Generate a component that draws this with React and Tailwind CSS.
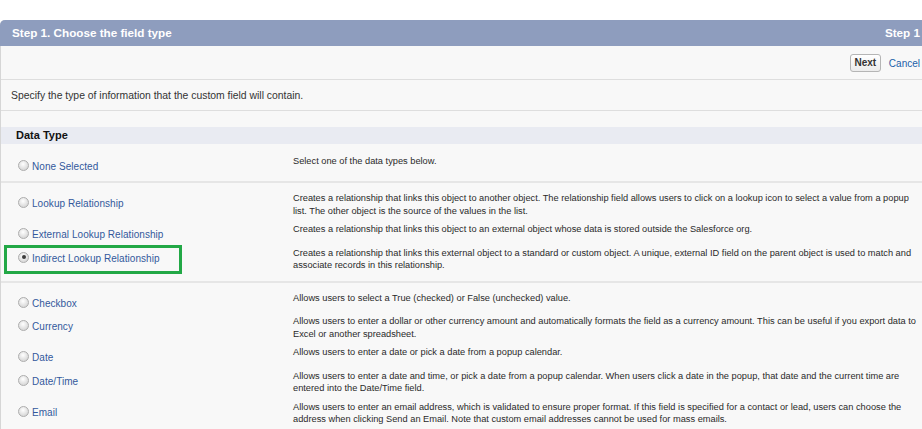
import React from "react";

function Radio({ checked }) {
  return (
    <span className="relative inline-block w-[11px] h-[11px] shrink-0 rounded-full border border-[#adadad] bg-[radial-gradient(circle_at_45%_35%,#ffffff_0%,#e2e2e2_55%,#cccccc_100%)]">
      {checked && (
        <span className="absolute left-[2.5px] top-[2.5px] w-[4px] h-[4px] rounded-full bg-[#3c3c3c]" />
      )}
    </span>
  );
}

function Row({ label, lines, checked, highlight }) {
  return (
    <div className="relative grid grid-cols-[292px_1fr]">
      <div className="flex items-start h-[23.5px] pt-[5px] pl-[17px] gap-[3px]">
        <Radio checked={checked} />
        <span className="text-[10px] leading-[13px] text-[#33589c] tracking-[0.05px] whitespace-nowrap">
          {label}
        </span>
      </div>
      <div className="pb-[6px] text-[9.25px] leading-[12.5px] text-[#2a2a2a] whitespace-nowrap">
        {lines.map((l, i) => (
          <div key={i}>{l}</div>
        ))}
      </div>
      {highlight && (
        <div className="absolute left-[3px] -top-[1.5px] w-[178px] h-[29px] border-[3px] border-[#22a846]" />
      )}
    </div>
  );
}

function Divider() {
  return <div className="h-[2px] bg-[#e6e6e6]" />;
}

export default function App() {
  return (
    <div className="w-[922px] h-[429px] overflow-hidden bg-white font-['Liberation_Sans',Arial,sans-serif]">
      <div className="h-[20px]" />
      <div className="w-[922px] bg-[#f8f8f8] border-l border-[#d6d6d6] rounded-tl-[5px]">
        <div className="h-[26px] -ml-px bg-[#8e9dbe] rounded-tl-[5px] flex items-center justify-between pl-[12px] pr-[2px] text-white font-bold text-[11.7px]">
          <span>Step 1. Choose the field type</span>
          <span>Step 1</span>
        </div>
        <div className="h-[34px] flex items-center justify-end pr-[2px] gap-[8px] border-b border-[#dedede] pt-[1px]">
          <button className="w-[31px] h-[18px] rounded-[3px] border border-[#b5b5b5] bg-[linear-gradient(#ffffff,#ececec)] text-[10px] font-bold text-[#333] leading-none">
            Next
          </button>
          <span className="text-[10px] text-[#1b5ea8]">Cancel</span>
        </div>
        <div className="h-[31px] flex items-center pl-[10px] pt-[1px] text-[10.4px] text-[#333] border-b border-[#dedede]">
          Specify the type of information that the custom field will contain.
        </div>
        <div className="h-[16px]" />
        <div className="h-[17px] bg-[#e9ebf2] flex items-center pl-[15px] text-[11px] font-bold text-[#111]">
          Data Type
        </div>

        <div className="pt-[11px] pb-[2.5px]">
          <Row label="None Selected" lines={["Select one of the data types below."]} />
        </div>
        <Divider />
        <div className="pt-[9px] pb-[3px]">
          <Row
            label="Lookup Relationship"
            lines={[
              "Creates a relationship that links this object to another object. The relationship field allows users to click on a lookup icon to select a value from a popup",
              "list. The other object is the source of the values in the list.",
            ]}
          />
          <Row
            label="External Lookup Relationship"
            lines={[
              "Creates a relationship that links this object to an external object whose data is stored outside the Salesforce org.",
            ]}
          />
          <Row
            label="Indirect Lookup Relationship"
            checked
            highlight
            lines={[
              "Creates a relationship that links this external object to a standard or custom object. A unique, external ID field on the parent object is used to match and",
              "associate records in this relationship.",
            ]}
          />
        </div>
        <Divider />
        <div className="pt-[9px]">
          <Row
            label="Checkbox"
            lines={["Allows users to select a True (checked) or False (unchecked) value."]}
          />
          <Row
            label="Currency"
            lines={[
              "Allows users to enter a dollar or other currency amount and automatically formats the field as a currency amount. This can be useful if you export data to",
              "Excel or another spreadsheet.",
            ]}
          />
          <Row
            label="Date"
            lines={["Allows users to enter a date or pick a date from a popup calendar."]}
          />
          <Row
            label="Date/Time"
            lines={[
              "Allows users to enter a date and time, or pick a date from a popup calendar. When users click a date in the popup, that date and the current time are",
              "entered into the Date/Time field.",
            ]}
          />
          <Row
            label="Email"
            lines={[
              "Allows users to enter an email address, which is validated to ensure proper format. If this field is specified for a contact or lead, users can choose the",
              "address when clicking Send an Email. Note that custom email addresses cannot be used for mass emails.",
            ]}
          />
        </div>
      </div>
    </div>
  );
}
